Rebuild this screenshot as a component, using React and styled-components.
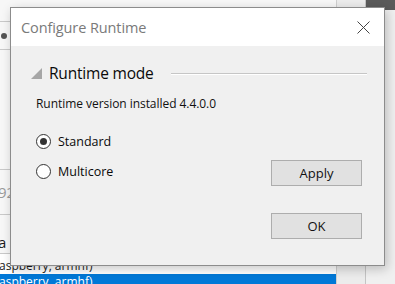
import React from "react";
import styled, { createGlobalStyle } from "styled-components";

const GlobalStyle = createGlobalStyle`
  html, body {
    margin: 0;
    padding: 0;
    background: #f0f0f0;
  }
  body {
    font-family: "Open Sans", "Noto Sans", sans-serif;
  }
`;

const Screen = styled.div`
  position: relative;
  width: 395px;
  height: 284px;
  overflow: hidden;
`;

/* ---- window behind the dialog ---- */

const Backdrop = styled.div`
  display: grid;
  grid-template-columns: 337px 29px 29px;
  height: 284px;
`;

const ListPane = styled.div`
  display: flex;
  flex-direction: column;
  background: #f7f7f7;
  border-right: 1px solid #cfcfcf;
`;

const Row = styled.div`
  height: ${(p) => p.h}px;
  flex: none;
  display: flex;
  align-items: ${(p) => p.align || "center"};
  box-sizing: border-box;
  padding-top: ${(p) => p.pt || 0}px;
  padding-bottom: ${(p) => p.pb || 0}px;
  border-bottom: ${(p) => (p.noLine ? "none" : "1px solid #c9c9c9")};
  background: ${(p) => (p.selected ? "#0078d7" : p.white ? "#ffffff" : "transparent")};
  color: ${(p) => (p.selected ? "#ffffff" : p.dim ? "#9a9a9a" : "#1a1a1a")};
  font-size: ${(p) => p.size || 12}px;
  overflow: hidden;
  white-space: nowrap;
`;

const Clip = styled.span`
  margin-left: ${(p) => p.shift || 0}px;
  line-height: 1;
`;

const Dot = styled.span`
  width: 6px;
  height: 6px;
  border-radius: 50%;
  background: #555;
  margin-left: 1px;
`;

const ScrollTrack = styled.div`
  background: #ececec;
  border-right: 1px solid #c4c4c4;
`;

const SidePane = styled.div`
  display: flex;
  flex-direction: column;
  background: #f0f0f0;
`;

const SideHead = styled.div`
  height: 10px;
  background: #5b5b5b;
`;

/* ---- dialog ---- */

const Dialog = styled.div`
  position: absolute;
  left: 10px;
  top: 7px;
  width: 375px;
  height: 259px;
  box-sizing: border-box;
  border: 1px solid #8c8c8c;
  background: #f0f0f0;
  box-shadow: 2px 3px 10px rgba(0, 0, 0, 0.22);
  display: flex;
  flex-direction: column;
`;

const TitleBar = styled.div`
  height: 38px;
  flex: none;
  background: #ffffff;
  display: flex;
  align-items: center;
  justify-content: space-between;
  padding: 0 14px 0 10px;
`;

const Title = styled.div`
  font-family: "Open Sans", "Noto Sans", sans-serif;
  font-size: 14.5px;
  color: #7a7a7a;
  letter-spacing: -0.1px;
`;

const Close = styled.svg`
  width: 13px;
  height: 13px;
  display: block;
`;

const Body = styled.div`
  flex: 1;
  display: flex;
  flex-direction: column;
  padding: 12px 22px 0 20px;
`;

const GroupHead = styled.div`
  display: flex;
  align-items: center;
  height: 30px;
`;

const Arrow = styled.svg`
  width: 11px;
  height: 11px;
  flex: none;
  margin-right: 7px;
`;

const GroupTitle = styled.div`
  font-size: 15.5px;
  color: #0a0a0a;
  letter-spacing: -0.2px;
  margin-right: 17px;
`;

const Rule = styled.div`
  flex: 1;
  height: 0;
  border-top: 1px solid #c6c6c6;
  border-bottom: 1px solid #ffffff;
  margin: 1px -5px 0 0;
`;

const Info = styled.div`
  font-size: 12px;
  color: #111;
  margin: 7px 0 0 5px;
  letter-spacing: -0.05px;
`;

const Options = styled.div`
  display: grid;
  grid-template-columns: 1fr 91px;
  grid-template-rows: 30px 30px;
  margin: 14px 0 0 5px;
  align-items: center;
`;

const RadioLabel = styled.label`
  display: flex;
  align-items: center;
  gap: 7px;
  font-size: 12.5px;
  color: #0a0a0a;
`;

const RadioCircle = styled.span`
  width: 13px;
  height: 13px;
  border-radius: 50%;
  border: 1px solid #333;
  background: #fff;
  display: flex;
  align-items: center;
  justify-content: center;
  flex: none;
  &::after {
    content: "";
    width: 7px;
    height: 7px;
    border-radius: 50%;
    background: ${(p) => (p.checked ? "#333" : "transparent")};
  }
`;

const Button = styled.button`
  width: 91px;
  height: 26px;
  box-sizing: border-box;
  border: 1px solid #adadad;
  background: #e1e1e1;
  font-family: "Open Sans", "Noto Sans", sans-serif;
  font-size: 13px;
  color: #111;
  padding: 0;
  grid-column: 2;
  grid-row: ${(p) => p.row || "auto"};
  align-self: ${(p) => p.align || "center"};
`;

const Footer = styled.div`
  display: flex;
  justify-content: flex-end;
  margin-top: 27px;
`;

const Radio = ({ checked, children }) => (
  <RadioLabel>
    <RadioCircle checked={checked} />
    {children}
  </RadioLabel>
);

export default function App() {
  return (
    <Screen>
      <GlobalStyle />
      <Backdrop>
        <ListPane>
          <Row h={22} dim>
            <Clip shift={-4} style={{ color: "#3b6fb6" }}>i</Clip>
          </Row>
          <Row h={28}>
            <Dot />
          </Row>
          <Row h={120} />
          <Row h={45} size={15} dim>
            <Clip shift={-2}>92.168</Clip>
          </Row>
          <Row h={39} size={15} pt={16}>
            <Clip shift={-2}>a</Clip>
          </Row>
          <Row h={20} white noLine align="flex-end" pb={2}>
            <Clip shift={-1}>aspberry, armhf)</Clip>
          </Row>
          <Row h={10} selected noLine align="flex-start" pt={2}>
            <Clip shift={-1}>aspberry, armhf)</Clip>
          </Row>
        </ListPane>
        <ScrollTrack />
        <SidePane>
          <SideHead />
        </SidePane>
      </Backdrop>

      <Dialog>
        <TitleBar>
          <Title>Configure Runtime</Title>
          <Close viewBox="0 0 13 13">
            <path d="M0.5 0.5 L12.5 12.5 M12.5 0.5 L0.5 12.5" stroke="#444" strokeWidth="1" />
          </Close>
        </TitleBar>
        <Body>
          <GroupHead>
            <Arrow viewBox="0 0 11 11">
              <polygon points="11,0 11,11 0,11" fill="#a6a6a6" />
            </Arrow>
            <GroupTitle>Runtime mode</GroupTitle>
            <Rule />
          </GroupHead>
          <Info>Runtime version installed 4.4.0.0</Info>
          <Options>
            <Radio checked>Standard</Radio>
            <span />
            <Radio>Multicore</Radio>
            <Button row="2" align="end">Apply</Button>
          </Options>
          <Footer>
            <Button>OK</Button>
          </Footer>
        </Body>
      </Dialog>
    </Screen>
  );
}
